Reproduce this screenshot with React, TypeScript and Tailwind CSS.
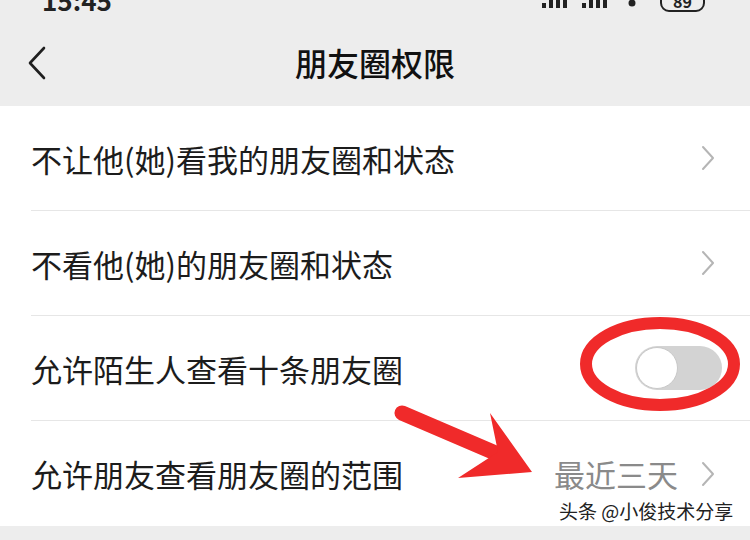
import React from "react";

const font = { fontFamily: '"Noto Sans CJK SC", "Noto Sans", sans-serif' };

function Chevron() {
  return (
    <svg width="16" height="26" viewBox="0 0 16 26" className="shrink-0">
      <path d="M3 2 L13 13 L3 24" fill="none" stroke="#b5b5b5" strokeWidth="2" strokeLinecap="round" strokeLinejoin="round" />
    </svg>
  );
}

function Row({ label, right, divider = true }: { label: string; right?: React.ReactNode; divider?: boolean }) {
  return (
    <div className="flex h-[105px] pl-[31px]">
      <div className={`flex flex-1 items-center pr-[34px] ${divider ? "border-b border-[#e6e6e6]" : ""}`}>
        <span className="flex-1 text-[31px] leading-none text-[#1c1c1c]">{label}</span>
        {right}
      </div>
    </div>
  );
}

function Signal() {
  return (
    <svg width="26" height="22" viewBox="0 0 26 22">
      <rect x="0" y="17" width="4" height="5" fill="#222" />
      <rect x="7" y="0" width="4" height="22" fill="#222" />
      <rect x="14" y="0" width="4" height="22" fill="#222" />
      <rect x="21" y="0" width="4" height="22" fill="#222" />
    </svg>
  );
}

export default function App() {
  return (
    <div className="relative w-[750px] h-[540px] overflow-hidden bg-[#ededed]" style={font}>
      {/* status bar */}
      <div className="flex h-[20px] items-end overflow-hidden pl-[42px] pr-[45px]">
        <span className="text-[26px] font-bold leading-none text-[#222] mb-[7px]">15:45</span>
        <div className="flex-1" />
        <div className="flex items-end mb-[12px]">
          <Signal />
          <div className="ml-[14px]">
            <Signal />
          </div>
          <svg width="16" height="20" viewBox="0 0 16 20" className="ml-[16px]">
            <path d="M2 6 Q8 1 14 6" fill="none" stroke="#222" strokeWidth="3" />
            <circle cx="8" cy="15" r="3.5" fill="#222" />
          </svg>
          <div className="ml-[20px] mb-[-4px] flex h-[30px] w-[45px] items-end justify-center rounded-[9px] border-[2.5px] border-[#222] pb-[1px]">
            <span className="text-[16px] font-bold leading-none text-[#222]">89</span>
          </div>
        </div>
      </div>

      {/* header */}
      <div className="flex h-[86px] items-center px-[26px]">
        <svg width="22" height="34" viewBox="0 0 22 34" className="shrink-0">
          <path d="M18 2 L4 17 L18 32" fill="none" stroke="#1f1f1f" strokeWidth="2.6" strokeLinecap="round" strokeLinejoin="round" />
        </svg>
        <div className="flex-1 text-center text-[32px] leading-none font-medium text-[#111] mr-[22px] mt-[-2px]">朋友圈权限</div>
      </div>

      {/* list */}
      <div className="bg-white">
        <Row label="不让他(她)看我的朋友圈和状态" right={<Chevron />} />
        <Row label="不看他(她)的朋友圈和状态" right={<Chevron />} />
        <Row
          label="允许陌生人查看十条朋友圈"
          right={
            <div className="mr-[-6px] flex h-[44px] w-[87px] items-center rounded-full bg-[#d3d3d3] p-[1px]">
              <div className="h-[42px] w-[42px] rounded-full border-[1.5px] border-[#c8c8c8] bg-white" />
            </div>
          }
        />
        <Row
          label="允许朋友查看朋友圈的范围"
          divider={false}
          right={
            <div className="flex items-center gap-[22px]">
              <span className="text-[31px] leading-none text-[#8a8a8a]">最近三天</span>
              <Chevron />
            </div>
          }
        />
      </div>

      {/* annotations */}
      <svg className="pointer-events-none absolute left-0 top-0" width="750" height="540" viewBox="0 0 750 540">
        <ellipse cx="660" cy="364" rx="74" ry="41" fill="none" stroke="#f02a2a" strokeWidth="12" />
        <line x1="402" y1="413" x2="500" y2="455" stroke="#f02a2a" strokeWidth="15" strokeLinecap="round" />
        <polygon points="490,413 532,472 458,478 498,452" fill="#f02a2a" />
      </svg>

      <div
        className="absolute left-[559px] top-[501px] text-[19px] leading-none text-[#222]"
        style={{ textShadow: "0 0 2px #fff, 0 0 2px #fff" }}
      >
        头条 @小俊技术分享
      </div>
    </div>
  );
}
